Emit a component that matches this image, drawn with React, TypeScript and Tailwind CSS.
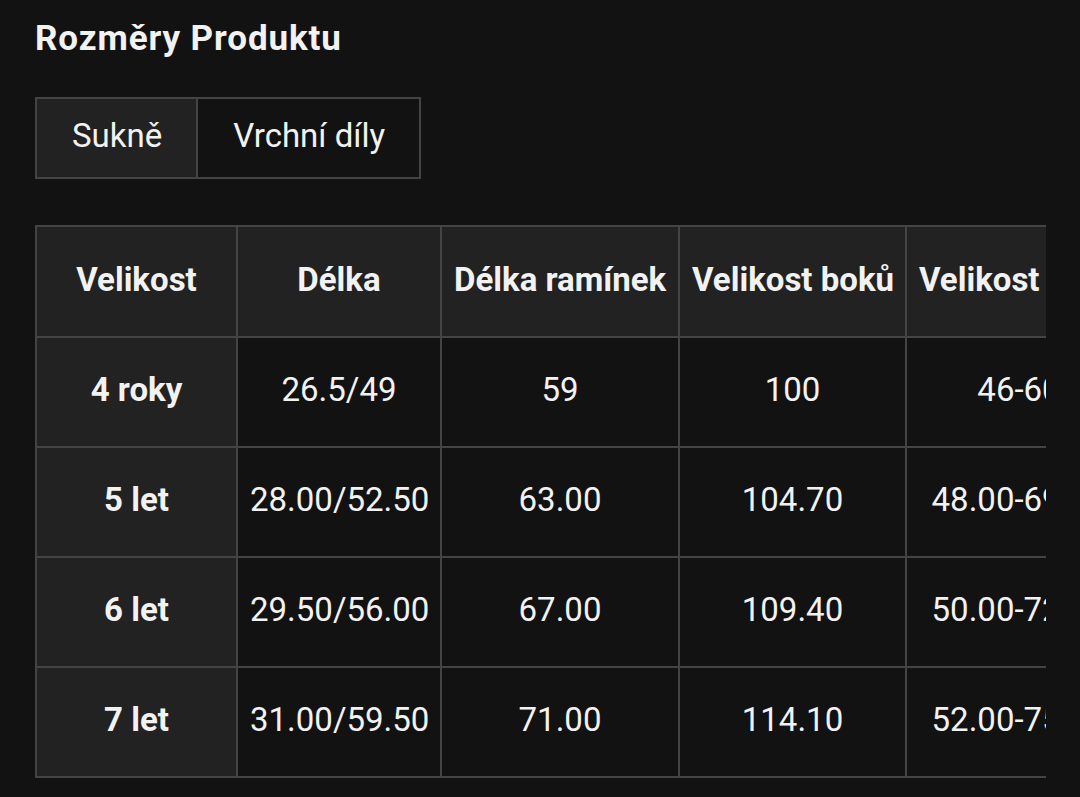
import React from "react";

const headers = ["Velikost", "Délka", "Délka ramínek", "Velikost boků", "Velikost pasu"];
const widths = ["w-[201px]", "w-[204px]", "w-[238px]", "w-[227px]", "w-[226px]"];
const rows = [
  ["4 roky", "26.5/49", "59", "100", "46-60"],
  ["5 let", "28.00/52.50", "63.00", "104.70", "48.00-69.00"],
  ["6 let", "29.50/56.00", "67.00", "109.40", "50.00-72.00"],
  ["7 let", "31.00/59.50", "71.00", "114.10", "52.00-75.00"],
];

export default function App() {
  return (
    <div
      className="min-h-[797px] w-[1080px] bg-[#121212] text-[#f2f2f2] pl-[35px] pr-[34px] pt-[15px] overflow-hidden"
      style={{ fontFamily: "Roboto, 'Noto Sans', sans-serif" }}
    >
      <h1 className="text-[35px] leading-[48px] font-bold tracking-[0.9px]">Rozměry Produktu</h1>
      <div className="mt-[34px] inline-flex border-2 border-[#444444]">
        <button className="bg-[#222222] pl-[35px] pr-[34px] pt-[13px] pb-[17px] text-[33px] leading-[48px] text-[#f2f2f2] border-r-2 border-[#444444]">
          Sukně
        </button>
        <button className="bg-[#121212] pl-[35px] pr-[34px] pt-[13px] pb-[17px] text-[33px] leading-[48px] text-[#f2f2f2]">
          Vrchní díly
        </button>
      </div>
      <div className="mt-[46px] w-[1011px] overflow-hidden">
        <table className="border-collapse table-fixed w-[1096px] text-[33px] leading-[48px]">
          <thead>
            <tr>
              {headers.map((h, i) => (
                <th
                  key={h}
                  className={`${widths[i]} h-[111px] bg-[#222222] border-2 border-[#444444] px-[12px] pb-[4px] font-bold text-center whitespace-nowrap overflow-hidden`}
                >
                  {h}
                </th>
              ))}
            </tr>
          </thead>
          <tbody>
            {rows.map((r) => (
              <tr key={r[0]}>
                {r.map((c, i) =>
                  i === 0 ? (
                    <td
                      key={i}
                      className="h-[110px] bg-[#222222] border-2 border-[#444444] px-[12px] pb-[4px] font-bold text-center whitespace-nowrap"
                    >
                      {c}
                    </td>
                  ) : (
                    <td
                      key={i}
                      className="h-[110px] bg-[#121212] border-2 border-[#444444] px-[12px] pb-[4px] text-center whitespace-nowrap"
                    >
                      {c}
                    </td>
                  )
                )}
              </tr>
            ))}
          </tbody>
        </table>
      </div>
    </div>
  );
}
